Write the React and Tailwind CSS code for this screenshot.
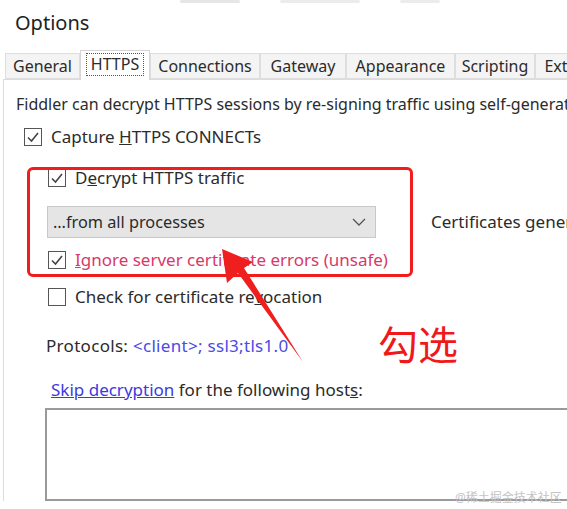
import React from 'react';

const font = { fontFamily: '"Noto Sans", "Noto Sans CJK SC", sans-serif' };

const Check = ({ checked }) => (
  <span className="flex h-[18px] w-[18px] shrink-0 items-center justify-center border-[1.5px] border-[#555] bg-white">
    {checked && (
      <svg width="14" height="14" viewBox="0 0 14 14">
        <path d="M2 7.5 L5.5 11 L12 3" fill="none" stroke="#444" strokeWidth="1.6" />
      </svg>
    )}
  </span>
);

const tabs = [
  ['General', 'w-[75px]'],
  ['HTTPS', 'w-[70px]'],
  ['Connections', 'w-[110px]'],
  ['Gateway', 'w-[86px]'],
  ['Appearance', 'w-[109px]'],
  ['Scripting', 'w-[80px]'],
  ['Extensions', 'w-[100px]'],
];

export default function App() {
  return (
    <div className="relative h-[509px] w-[567px] overflow-hidden bg-white text-[#2b2b2b]" style={font}>
      {/* clipped text above */}
      <div className="flex h-[4px] gap-10 pl-[180px]">
        <div className="h-[3px] w-[60px] rounded bg-[#e6e6e6]" />
        <div className="h-[3px] w-[80px] rounded bg-[#ececec]" />
        <div className="h-[3px] w-[40px] rounded bg-[#ececec]" />
      </div>
      <div className="pl-[15px] pt-[6px] text-[20px] leading-[26px] text-[#222]">Options</div>

      {/* tabs */}
      <div className="mt-[14px] flex items-end pl-[5px] text-[16px]">
        {tabs.map(([t, w]) => {
          const sel = t === 'HTTPS';
          return (
            <div
              key={t}
              className={
                sel
                  ? `relative z-10 -mb-px flex h-[30px] shrink-0 items-start justify-center border border-b-0 border-[#d6d6d6] bg-white pt-[2px] ${w}`
                  : `flex h-[26px] shrink-0 items-center justify-center border border-[#dedede] bg-[#f4f4f4] ${w}`
              }
            >
              {sel ? (
                <span className="border border-dotted border-[#555] px-[4px] leading-[21px]">{t}</span>
              ) : (
                t
              )}
            </div>
          );
        })}
      </div>

      {/* panel */}
      <div className="ml-[3px] border-l border-t border-[#dcdcdc] pl-[12px] pt-[13px] text-[17px] leading-[22px]">
        <div className="whitespace-nowrap text-[16px]">
          Fiddler can decrypt HTTPS sessions by re-signing traffic using self-generated certificates.
        </div>

        <div className="mt-[11px] flex items-center gap-[9px] pl-[8px]">
          <Check checked />
          <span>
            Capture <u>H</u>TTPS CONNECTs
          </span>
        </div>

        <div className="mt-[19px] flex items-center gap-[9px] pl-[32px]">
          <Check checked />
          <span>
            D<u>e</u>crypt HTTPS traffic
          </span>
        </div>

        <div className="mt-[17px] flex items-center pl-[31px]">
          <div className="flex h-[32px] w-[329px] shrink-0 items-center justify-between border border-[#c8c8c8] bg-[#e5e5e5] pl-[5px] pr-[9px] text-[16.3px]">
            <span>…from all processes</span>
            <svg width="14" height="8" viewBox="0 0 14 8">
              <path d="M1 1 L7 7 L13 1" fill="none" stroke="#555" strokeWidth="1.3" />
            </svg>
          </div>
          <span className="ml-[55px] whitespace-nowrap">Certificates generated by CertEnroll</span>
        </div>

        <div className="mt-[11px] flex items-center gap-[9px] pl-[32px] text-[#d8386a]">
          <Check checked />
          <span>
            <u>I</u>gnore server certificate errors (unsafe)
          </span>
        </div>

        <div className="mt-[15px] flex items-center gap-[9px] pl-[32px]">
          <Check />
          <span>
            Check for certificate re<u>v</u>ocation
          </span>
        </div>

        <div className="mt-[27px] pl-[30px] tracking-[0.3px]">
          Protocols: <span className="text-[#4b4be6]">&lt;client&gt;; ssl3;tls1.0</span>
        </div>

        <div className="mt-[22px] pl-[35px]">
          <span className="text-[#3a3ae0] underline">Skip decryption</span> for the following host<u>s</u>:
        </div>

        <div className="ml-[29px] mt-[7px] h-[93px] border-2 border-r-0 border-[#9a9a9a]" />
      </div>

      {/* annotations */}
      <div className="absolute left-[27px] top-[167px] h-[110px] w-[386px] rounded-[6px] border-[3px] border-[#f21c1c]" />
      <svg className="absolute left-0 top-0" width="567" height="509">
        <polygon points="222,249 253,262 244,268 303,362 238,273 227,283" fill="#ef1f1f" />
      </svg>
      <div className="absolute left-[378px] top-[322px] text-[40px] leading-[46px] text-[#f01818]">勾选</div>
      <div className="absolute left-[455px] top-[489px] text-[12px] text-[#c4c4c4]">@稀土掘金技术社区</div>
    </div>
  );
}
